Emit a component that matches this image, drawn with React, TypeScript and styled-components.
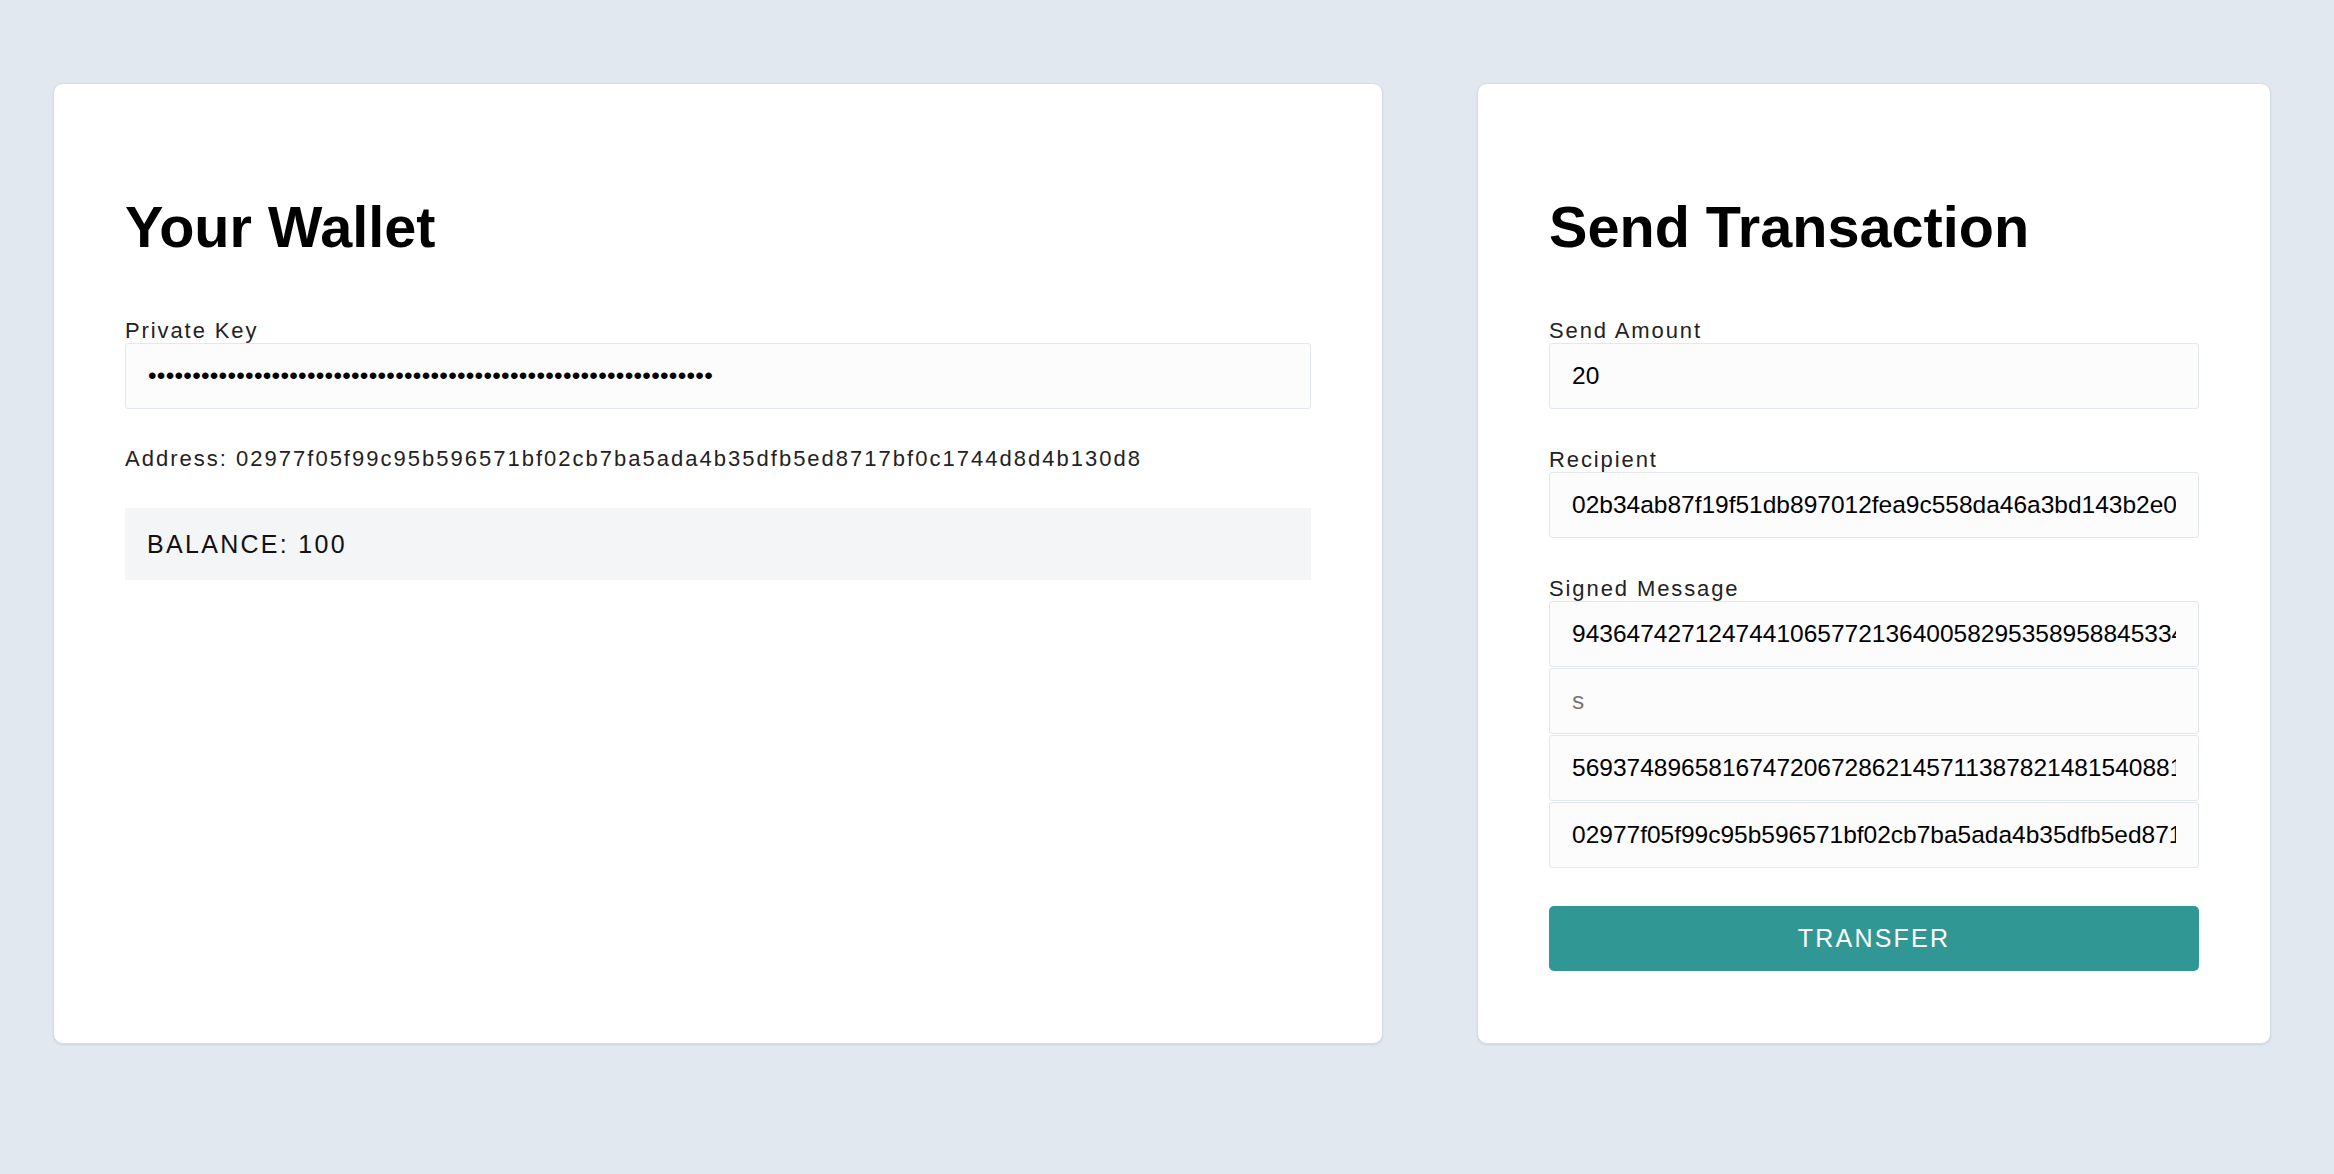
import React from "react";
import styled, { createGlobalStyle } from "styled-components";

const GlobalStyle = createGlobalStyle`
  html, body {
    margin: 0;
    padding: 0;
    background: #e2e8f0;
    font-family: "Liberation Sans", Arial, Helvetica, sans-serif;
  }
  * { box-sizing: border-box; }
`;

const Page = styled.div`
  display: flex;
  align-items: stretch;
  gap: 94px;
  padding: 83px 63px 0 53px;
  min-height: 1174px;
`;

const Card = styled.section<{ $width?: number }>`
  display: flex;
  flex-direction: column;
  background: #ffffff;
  border: 1px solid #d6dde7;
  border-radius: 10px;
  box-shadow: 0 1px 2px rgba(100, 116, 139, 0.18);
  padding: 111px 71px 72px;
  flex: ${(p) => (p.$width ? `0 0 ${p.$width}px` : "1 1 auto")};
  align-self: flex-start;
  min-height: 961px;
`;

const Title = styled.h1`
  margin: 0 0 59px;
  font-size: 57.6px;
  line-height: 64px;
  font-weight: 700;
  color: #000;
  letter-spacing: 0;
`;

const Stack = styled.div<{ $gap: number }>`
  display: flex;
  flex-direction: column;
  gap: ${(p) => p.$gap}px;
`;

const Field = styled.label`
  display: flex;
  flex-direction: column;
`;

const LabelText = styled.span`
  display: block;
  font-size: 22px;
  line-height: 25px;
  letter-spacing: 1.9px;
  color: #222;
`;

const InputGroup = styled.div`
  display: flex;
  flex-direction: column;
  gap: 1px;
`;

const Input = styled.input`
  display: block;
  width: 100%;
  height: 66px;
  margin: 0;
  padding: 0 22px;
  border: 1px solid #e3e8ef;
  border-radius: 3px;
  background: #fcfcfd;
  font-family: "Liberation Sans", Arial, Helvetica, sans-serif;
  font-size: 24.5px;
  color: #000;
  outline: none;
  &[type="password"] {
    letter-spacing: 0.25px;
  }
  &::placeholder {
    color: #767676;
  }
`;

const Address = styled.div`
  font-size: 22px;
  line-height: 25px;
  letter-spacing: 2.01px;
  color: #222;
  white-space: nowrap;
`;

const Balance = styled.div`
  display: flex;
  align-items: center;
  height: 72px;
  padding: 0 22px;
  background: #f4f5f7;
  font-size: 25px;
  letter-spacing: 2.3px;
  color: #111;
`;

const Button = styled.button`
  display: flex;
  align-items: center;
  justify-content: center;
  height: 65px;
  width: 100%;
  margin: 0;
  border: none;
  border-radius: 5px;
  background: #319795;
  color: #fff;
  font-family: "Liberation Sans", Arial, Helvetica, sans-serif;
  font-size: 25px;
  letter-spacing: 2.2px;
  text-transform: uppercase;
  cursor: pointer;
`;

const PRIVATE_KEY = "a3f1c9e27b84d05f6a19c3e8d7b2f4a05e6c8d91b3a7f2e4c6d8b0a1e3f5c7d9";
const ADDRESS = "02977f05f99c95b596571bf02cb7ba5ada4b35dfb5ed8717bf0c1744d8d4b130d8";
const RECIPIENT = "02b34ab87f19f51db897012fea9c558da46a3bd143b2e05c7d81f6a2e94b03d7c1";
const SIG_R = "94364742712474410657721364005829535895884533412876509143276681902354817";
const SIG_R2 = "56937489658167472067286214571138782148154088137264910582736451029384756";

export default function App() {
  return (
    <>
      <GlobalStyle />
      <Page>
        <Card>
          <Title>Your Wallet</Title>
          <Stack $gap={37}>
            <Field>
              <LabelText>Private Key</LabelText>
              <Input type="password" defaultValue={PRIVATE_KEY} />
            </Field>
            <Address>Address: {ADDRESS}</Address>
            <Balance>BALANCE: 100</Balance>
          </Stack>
        </Card>
        <Card $width={794}>
          <Title>Send Transaction</Title>
          <Stack $gap={38}>
            <Field>
              <LabelText>Send Amount</LabelText>
              <Input defaultValue="20" />
            </Field>
            <Field>
              <LabelText>Recipient</LabelText>
              <Input defaultValue={RECIPIENT} />
            </Field>
            <Field as="div">
              <LabelText>Signed Message</LabelText>
              <InputGroup>
                <Input defaultValue={SIG_R} />
                <Input placeholder="s" />
                <Input defaultValue={SIG_R2} />
                <Input defaultValue={ADDRESS} />
              </InputGroup>
            </Field>
            <Button type="button">Transfer</Button>
          </Stack>
        </Card>
      </Page>
    </>
  );
}
